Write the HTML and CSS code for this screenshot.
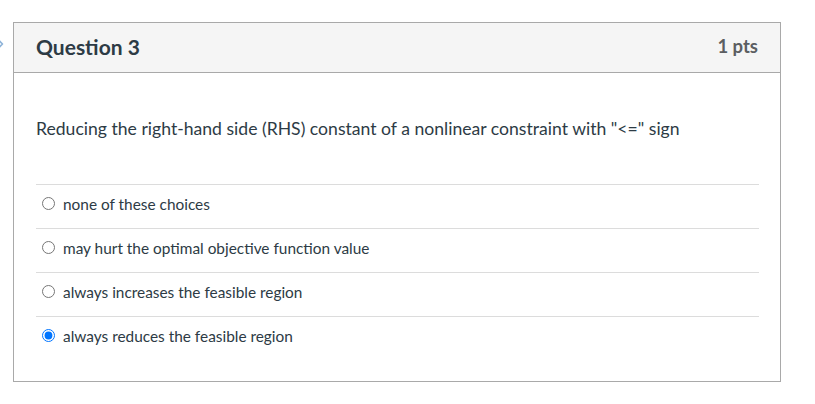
FILE: index.html
```html
<!DOCTYPE html>
<html>
<head>
<meta charset="utf-8">
<link rel="stylesheet" href="styles.css">
</head>
<body>
<svg class="nav-chevron" width="8" height="12" viewBox="0 0 8 12"><path d="M1 1.5 L5.5 6 L1 10.5" fill="none" stroke="#8fb4d9" stroke-width="1.6" stroke-linecap="round" stroke-linejoin="round"/></svg>
<div class="question">
  <div class="q-header">
    <span class="q-name">Question 3</span>
    <span class="q-points">1 pts</span>
  </div>
  <div class="q-body">
    <div class="q-text">Reducing the right-hand side (RHS) constant of a nonlinear constraint with "&lt;=" sign</div>
    <div class="answers">
      <label class="answer"><input type="radio" name="a"><span>none of these choices</span></label>
      <label class="answer"><input type="radio" name="a"><span>may hurt the optimal objective function value</span></label>
      <label class="answer"><input type="radio" name="a"><span>always increases the feasible region</span></label>
      <label class="answer"><input type="radio" name="a" checked><span>always reduces the feasible region</span></label>
    </div>
  </div>
</div>
</body>
</html>
```

FILE: styles.css
```css
html, body {
  margin: 0;
  padding: 0;
  background: #ffffff;
}
body {
  font-family: Lato, "Liberation Sans", sans-serif;
  color: #2d3b45;
  width: 815px;
  height: 404px;
  position: relative;
  overflow: hidden;
}
.nav-chevron {
  position: absolute;
  left: -3px;
  top: 38px;
}
.question {
  margin: 22px 0 0 13px;
  width: 766px;
  border: 1px solid #a9a9a9;
}
.q-header {
  height: 46px;
  padding: 0 22px 3px 22px;
  background: #f5f5f5;
  border-bottom: 1px solid #a9a9a9;
  display: flex;
  align-items: center;
  justify-content: space-between;
}
.q-name {
  font-size: 21px;
  font-weight: 700;
  color: #2d3b45;
}
.q-points {
  font-size: 18.5px;
  font-weight: 700;
  color: #5b5e61;
}
.q-body {
  padding: 43px 21px 21px 22px;
}
.q-text {
  font-size: 17.6px;
  line-height: 26px;
  margin-bottom: 42px;
}
.answer {
  display: flex;
  align-items: center;
  box-sizing: border-box;
  height: 44px;
  padding-bottom: 6px;
  border-top: 1px solid #dcdcdc;
  font-size: 15.4px;
}
.answer input {
  margin: 0 8px 0 6px;
  width: 13px;
  height: 13px;
}
```
